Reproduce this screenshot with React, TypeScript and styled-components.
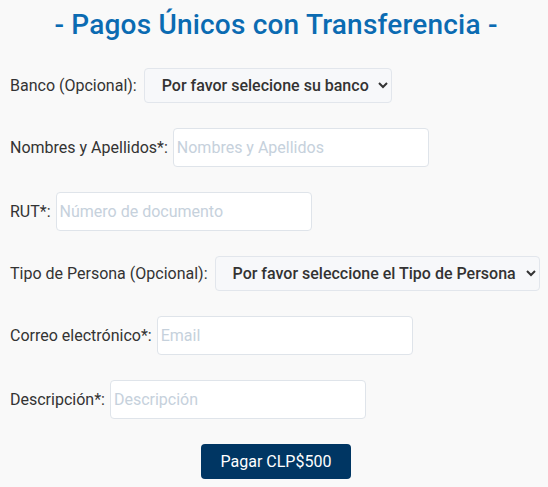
import React from 'react';
import styled, { createGlobalStyle } from 'styled-components';

const GlobalStyle = createGlobalStyle`
  body {
    margin: 0;
    background: #f9f9f9;
    font-family: Roboto, "Liberation Sans", sans-serif;
    color: #333;
  }
`;

const Page = styled.form`
  padding: 5px 10px 8px 10px;
`;

const Title = styled.h1`
  margin: 0 0 23px 0;
  text-align: center;
  font-size: 28px;
  font-weight: 500;
  line-height: 40px;
  letter-spacing: 0.2px;
  color: #0b6bb2;
  padding-left: 4px;
`;

const Row = styled.div`
  display: flex;
  align-items: center;
  gap: 5px;
  margin-bottom: 25px;
`;

const Label = styled.label`
  flex-shrink: 0;
  white-space: nowrap;
  font-size: 16px;
  color: #333;
`;

const Input = styled.input`
  box-sizing: border-box;
  width: 256px;
  height: 39px;
  padding: 0 3px;
  border: 1px solid #dfe4ea;
  border-radius: 4px;
  background: #fff;
  font-family: inherit;
  font-size: 16px;
  color: #333;
  outline: none;

  &::placeholder {
    color: #c6d1dc;
  }
`;

const Select = styled.select`
  box-sizing: border-box;
  flex-shrink: 0;
  height: 35px;
  padding: 0 6px 0 13px;
  border: 1px solid #e2e6ec;
  border-radius: 4px;
  background: #f7f8fa;
  font-family: inherit;
  font-size: 16px;
  font-weight: 500;
  color: #333;
  margin-left: 2px;
`;

const Actions = styled.div`
  display: flex;
  justify-content: center;
  padding-left: 4px;
`;

const PayButton = styled.button`
  width: 150px;
  height: 35px;
  border: 0;
  border-radius: 4px;
  background: #003663;
  color: #fff;
  font-family: inherit;
  font-size: 16px;
  font-weight: 400;
  cursor: pointer;
`;

const fields = [
  { label: 'Nombres y Apellidos*:', placeholder: 'Nombres y Apellidos' },
  { label: 'RUT*:', placeholder: 'Número de documento' },
];

const fields2 = [
  { label: 'Correo electrónico*:', placeholder: 'Email' },
  { label: 'Descripción*:', placeholder: 'Descripción' },
];

export default function App() {
  return (
    <>
      <GlobalStyle />
      <Page onSubmit={e => e.preventDefault()}>
        <Title>- Pagos Únicos con Transferencia -</Title>
        <Row>
          <Label>Banco (Opcional):</Label>
          <Select defaultValue="">
            <option value="">Por favor selecione su banco</option>
          </Select>
        </Row>
        {fields.map(f => (
          <Row key={f.label}>
            <Label>{f.label}</Label>
            <Input type="text" placeholder={f.placeholder} />
          </Row>
        ))}
        <Row>
          <Label>Tipo de Persona (Opcional):</Label>
          <Select defaultValue="">
            <option value="">Por favor seleccione el Tipo de Persona</option>
          </Select>
        </Row>
        {fields2.map(f => (
          <Row key={f.label}>
            <Label>{f.label}</Label>
            <Input type="text" placeholder={f.placeholder} />
          </Row>
        ))}
        <Actions>
          <PayButton type="submit">Pagar CLP$500</PayButton>
        </Actions>
      </Page>
    </>
  );
}
